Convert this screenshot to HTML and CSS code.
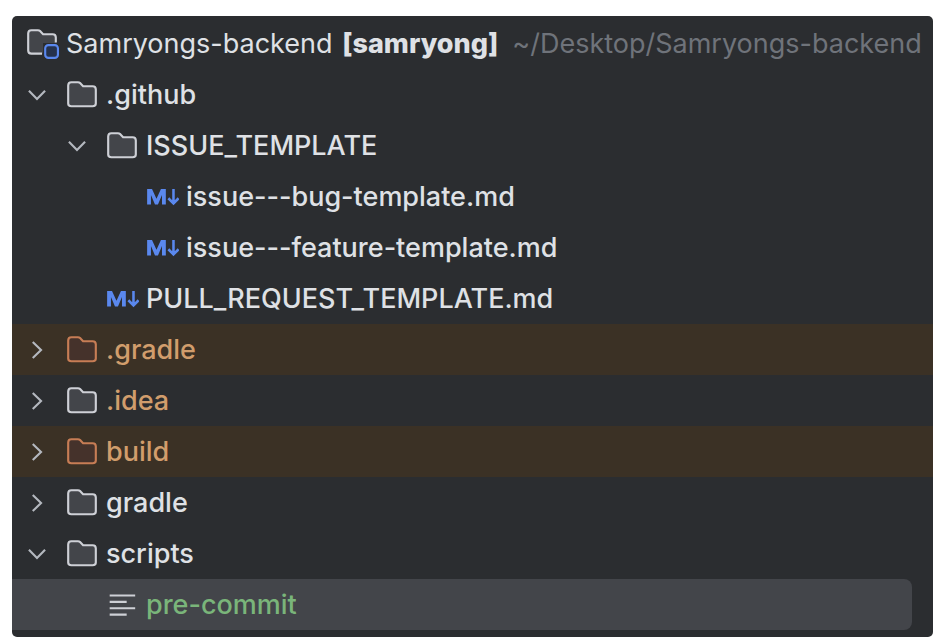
FILE: index.html
```html
<!DOCTYPE html>
<html lang="en">
<head>
  <meta charset="UTF-8">
  <meta name="viewport" content="width=device-width, initial-scale=1.0">
  <title>Samryongs-backend</title>
  <link rel="stylesheet" href="styles.css">
</head>
<body>
  <svg class="sprite" aria-hidden="true">
    <symbol id="folder" viewBox="0 0 16 16">
      <path d="M1.5 3.5Q1.5 2 3 2H6.1Q6.7 2 7.1 2.4L8.5 3.9H13Q14.5 3.9 14.5 5.4V12Q14.5 13.3 13 13.3H3Q1.5 13.3 1.5 12Z"/>
    </symbol>
    <symbol id="chevron-down" viewBox="0 0 16 16">
      <path d="M4.2 6L8 9.9L11.8 6"/>
    </symbol>
    <symbol id="chevron-right" viewBox="0 0 16 16">
      <path d="M6 4.2L9.9 8L6 11.8"/>
    </symbol>
    <symbol id="markdown" viewBox="0 0 16 16">
      <path class="letter" d="M1 11.5V4.2H3.3L5.4 8.8L7.5 4.2H9.8V11.5H8V7.1L6.1 11.5H4.7L2.8 7.1V11.5Z"/>
      <path class="arrow" d="M13.4 4.2V11M11 8.6L13.4 11L15.8 8.6"/>
    </symbol>
  </svg>

  <main class="project">
    <div class="row root">
      <svg class="icon" viewBox="0 0 16 16" aria-hidden="true">
        <path class="module-fill" d="M1.5 3Q1.5 1.5 3 1.5H6.1Q6.7 1.5 7.1 1.9L8.5 3.4H13Q14.5 3.4 14.5 4.9V7.5H8.5V12.5H3Q1.5 12.5 1.5 11Z"/>
        <path class="module-line" d="M14.5 7.3V4.9Q14.5 3.4 13 3.4H8.5L7.1 1.9Q6.7 1.5 6.1 1.5H3Q1.5 1.5 1.5 3V11Q1.5 12.5 3 12.5H8"/>
        <rect class="module-badge" x="9.5" y="8.5" width="6" height="6" rx="1.5"/>
      </svg>
      <h1 class="name">Samryongs-backend <strong>[samryong]</strong></h1>
      <span class="path">~/Desktop/Samryongs-backend</span>
    </div>

    <ul class="tree">
      <li>
        <button class="row" aria-expanded="true">
          <svg class="chevron" aria-hidden="true"><use href="#chevron-down"/></svg>
          <svg class="icon folder" aria-hidden="true"><use href="#folder"/></svg>
          <span>.github</span>
        </button>
        <ul class="tree">
          <li>
            <button class="row level-2" aria-expanded="true">
              <svg class="chevron" aria-hidden="true"><use href="#chevron-down"/></svg>
              <svg class="icon folder" aria-hidden="true"><use href="#folder"/></svg>
              <span>ISSUE_TEMPLATE</span>
            </button>
            <ul class="tree">
              <li>
                <button class="row file level-3">
                  <svg class="icon markdown" aria-hidden="true"><use href="#markdown"/></svg>
                  <span>issue---bug-template.md</span>
                </button>
              </li>
              <li>
                <button class="row file level-3">
                  <svg class="icon markdown" aria-hidden="true"><use href="#markdown"/></svg>
                  <span>issue---feature-template.md</span>
                </button>
              </li>
            </ul>
          </li>
          <li>
            <button class="row file level-2">
              <svg class="icon markdown" aria-hidden="true"><use href="#markdown"/></svg>
              <span>PULL_REQUEST_TEMPLATE.md</span>
            </button>
          </li>
        </ul>
      </li>
      <li>
        <button class="row ignored excluded" aria-expanded="false">
          <svg class="chevron" aria-hidden="true"><use href="#chevron-right"/></svg>
          <svg class="icon folder" aria-hidden="true"><use href="#folder"/></svg>
          <span>.gradle</span>
        </button>
      </li>
      <li>
        <button class="row ignored" aria-expanded="false">
          <svg class="chevron" aria-hidden="true"><use href="#chevron-right"/></svg>
          <svg class="icon folder" aria-hidden="true"><use href="#folder"/></svg>
          <span>.idea</span>
        </button>
      </li>
      <li>
        <button class="row ignored excluded" aria-expanded="false">
          <svg class="chevron" aria-hidden="true"><use href="#chevron-right"/></svg>
          <svg class="icon folder" aria-hidden="true"><use href="#folder"/></svg>
          <span>build</span>
        </button>
      </li>
      <li>
        <button class="row" aria-expanded="false">
          <svg class="chevron" aria-hidden="true"><use href="#chevron-right"/></svg>
          <svg class="icon folder" aria-hidden="true"><use href="#folder"/></svg>
          <span>gradle</span>
        </button>
      </li>
      <li>
        <button class="row" aria-expanded="true">
          <svg class="chevron" aria-hidden="true"><use href="#chevron-down"/></svg>
          <svg class="icon folder" aria-hidden="true"><use href="#folder"/></svg>
          <span>scripts</span>
        </button>
        <ul class="tree">
          <li class="selected">
            <button class="row file level-2 added">
              <svg class="icon text-file" viewBox="0 0 16 16" aria-hidden="true">
                <path d="M2.2 3.5H14.2M2.2 6.5H10.2M2.2 9.5H14.2M2.2 12.5H10.2"/>
              </svg>
              <span>pre-commit</span>
            </button>
          </li>
        </ul>
      </li>
    </ul>
  </main>
</body>
</html>
```

FILE: styles.css
```css
* {
  box-sizing: border-box;
}

body {
  margin: 0;
  padding: 16px 11px 0 12px;
  background: #fff;
  color: #dfe1e5;
  font-family: Inter, "Liberation Sans", sans-serif;
  font-size: 27px;
}

.sprite {
  display: none;
}

.project {
  padding: 2px 0 7px;
  background: #2b2d30;
  border-radius: 5px;
  overflow: hidden;
}

.tree {
  margin: 0;
  padding: 0;
  list-style: none;
  font-weight: 500;
}

.row {
  display: flex;
  align-items: center;
  gap: 7px;
  width: 100%;
  height: 51px;
  padding: 0 0 0 8px;
  border: 0;
  background: none;
  color: inherit;
  font: inherit;
  text-align: left;
  white-space: nowrap;
}

.root {
  padding-left: 13px;
}

.name {
  margin: 0;
  font-size: inherit;
  font-weight: 400;
}

.name strong {
  margin-left: 2px;
  font-weight: 800;
}

.path {
  margin-left: 7px;
  color: #6f737a;
}

.level-2 {
  padding-left: 48px;
}

/* files have no chevron, so they start at the icon column */
.file {
  padding-left: 53px;
}

.file.level-2 {
  padding-left: 93px;
}

.file.level-3 {
  padding-left: 133px;
}

.icon,
.chevron {
  flex: none;
  width: 34px;
  height: 34px;
  fill: none;
}

.chevron {
  margin-right: 4px;
  stroke: #b4b8bf;
}

.folder {
  fill: #43454a;
  stroke: #ced0d6;
}

.markdown {
  fill: #5a88ee;
}

.arrow {
  fill: none;
  stroke: #5a88ee;
  stroke-width: 1.2;
}

.text-file {
  stroke: #ced0d6;
}

.module-fill {
  fill: #43454a;
}

.module-line {
  stroke: #ced0d6;
}

.module-badge {
  fill: #25324d;
  stroke: #5a88ee;
}

.ignored {
  color: #d19d6c;
}

.excluded {
  background: #3b3125;
}

.excluded .folder {
  fill: #45322b;
  stroke: #c77d55;
}

.added {
  color: #7ab57a;
}

.selected {
  margin-right: 21px;
  background: #43454a;
  border-radius: 0 8px 8px 0;
}
```
